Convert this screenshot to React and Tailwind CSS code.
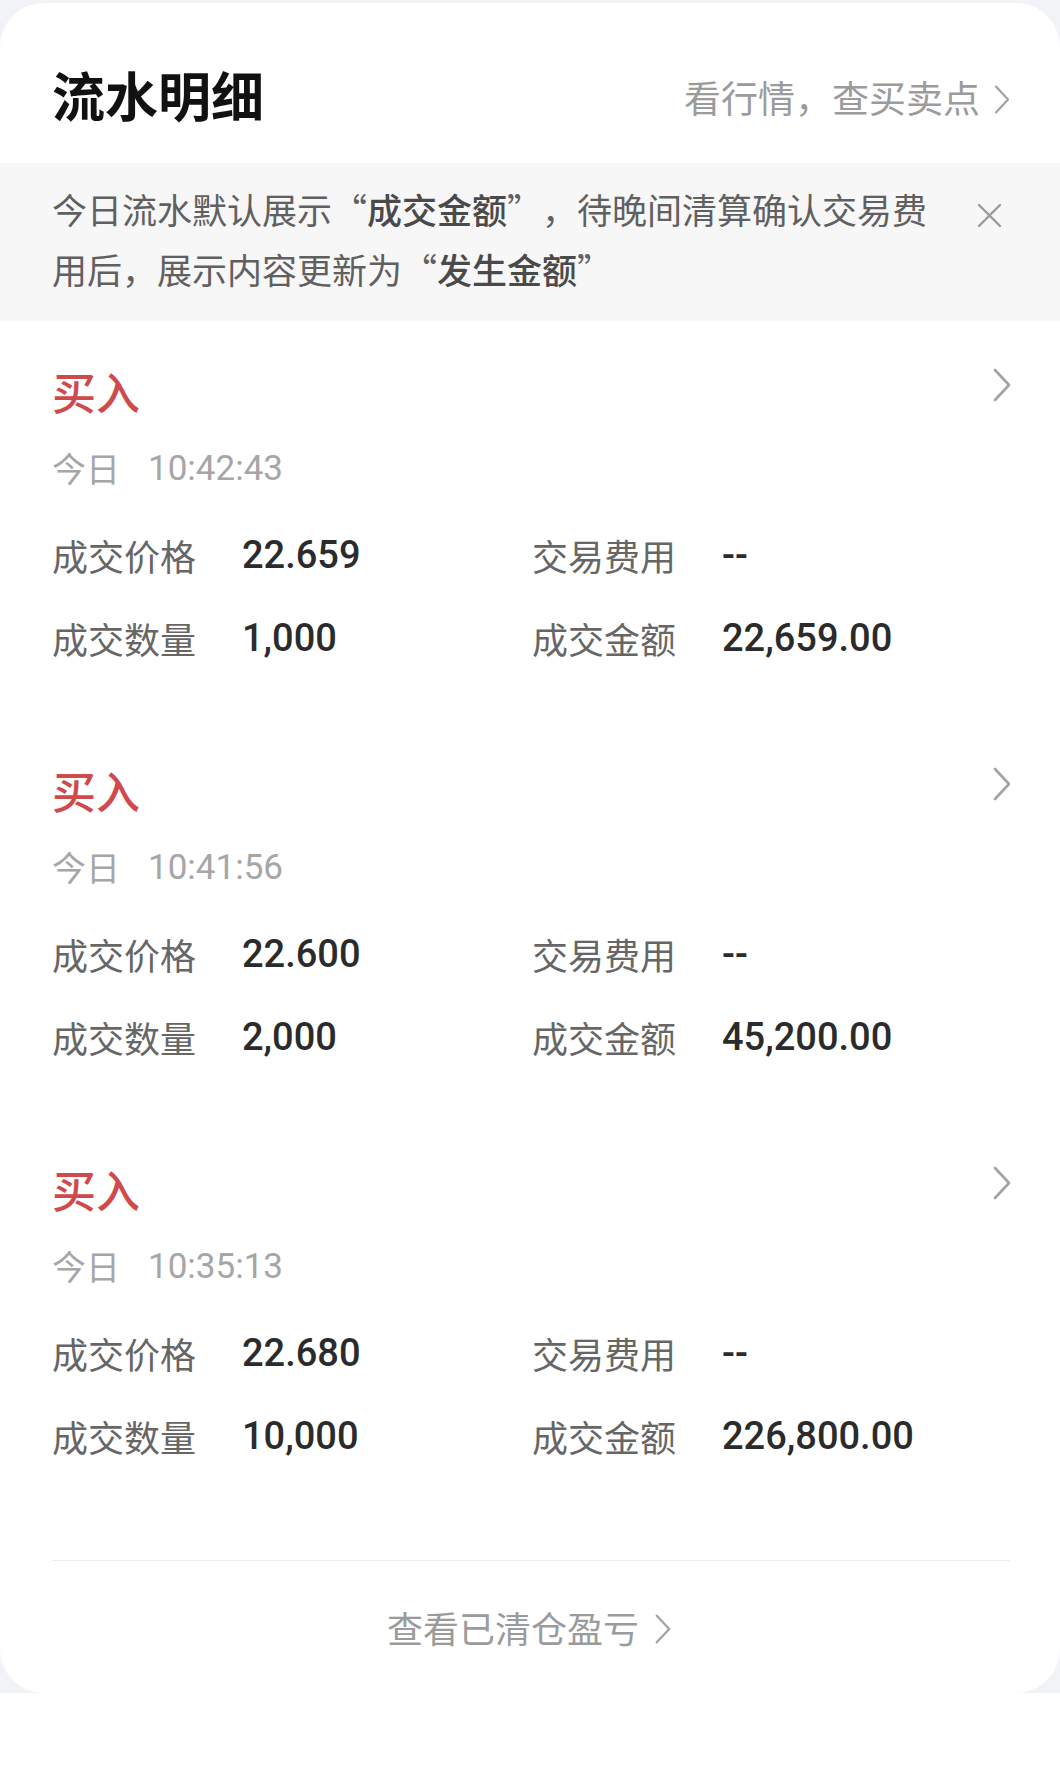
import React from 'react'

const cjk = "[font-family:'Noto_Sans_CJK_SC','Noto_Sans',sans-serif]"
const num = "[font-family:Roboto,'Noto_Sans_CJK_SC',sans-serif]"

const trades = [
  { time: '10:42:43', price: '22.659', qty: '1,000', fee: '--', amount: '22,659.00' },
  { time: '10:41:56', price: '22.600', qty: '2,000', fee: '--', amount: '45,200.00' },
  { time: '10:35:13', price: '22.680', qty: '10,000', fee: '--', amount: '226,800.00' },
]

const Chevron = ({ className }) => (
  <svg viewBox="0 0 20 36" className={className} fill="none">
    <path d="M3 3 L17 18 L3 33" stroke="#a3a3a3" strokeWidth="2.6" strokeLinecap="round" strokeLinejoin="round" />
  </svg>
)

const Cell = ({ label, value }) => (
  <div className="flex h-[60px] items-center">
    <span className={`${cjk} w-[190px] text-[36px] leading-none text-[#666666]`}>{label}</span>
    <span className={`${num} text-[38px] font-medium leading-none text-[#2b2b2b]`}>{value}</span>
  </div>
)

const TradeBlock = ({ trade }) => (
  <div className="pl-[52px] pr-[48px] pt-[48px] pb-[52px]">
    <div className="flex h-[50px] items-start justify-between">
      <span className={`${cjk} -mt-[3px] text-[44px] font-medium leading-[50px] text-[#d04a4c]`}>买入</span>
      <Chevron className="-mt-[2px] h-[36px] w-[20px]" />
    </div>
    <div className="mt-[29px] flex h-[40px] items-center text-[#a6a6a6]">
      <span className={`${cjk} text-[34px] leading-none`}>今日</span>
      <span className={`${num} ml-[28px] text-[35px] leading-none`}>{trade.time}</span>
    </div>
    <div className="mt-[37px] grid grid-cols-2 gap-y-[23px]">
      <Cell label="成交价格" value={trade.price} />
      <Cell label="交易费用" value={trade.fee} />
      <Cell label="成交数量" value={trade.qty} />
      <Cell label="成交金额" value={trade.amount} />
    </div>
  </div>
)

export default function App() {
  return (
    <div className="min-h-[1791px] w-full bg-white">
      <div className="bg-[#f2f3f7] pt-[3px]">
        <div className="rounded-[44px] bg-white overflow-hidden">
          {/* header */}
          <div className="flex h-[160px] items-center justify-between pl-[52px] pr-[48px] pt-[22px]">
            <h1 className={`${cjk} text-[53px] font-bold leading-none text-[#111111]`}>流水明细</h1>
            <div className="flex items-center gap-[12px] pt-[6px]">
              <span className={`${cjk} text-[37px] leading-none text-[#9b9b9b]`}>看行情，查买卖点</span>
              <Chevron className="mt-[4px] h-[31px] w-[20px]" />
            </div>
          </div>

          {/* notice */}
          <div className="flex bg-[#f7f7f7] pt-[16px] pb-[22px] pl-[52px]">
            <p className={`${cjk} w-[890px] text-[35px] leading-[60px] text-[#606060] [text-spacing-trim:space-all]`}>
              今日流水默认展示“<span className="font-medium text-[#4a4a4a]">成交金额</span>”，待晚间清算确认交易费用后，展示内容更新为“<span className="font-medium text-[#4a4a4a]">发生金额</span>”
            </p>
            <svg viewBox="0 0 25 25" className="ml-[35px] mt-[24px] h-[25px] w-[25px] shrink-0" fill="none">
              <path d="M2 2 L23 23 M23 2 L2 23" stroke="#9a9a9a" strokeWidth="2.4" strokeLinecap="round" />
            </svg>
          </div>

          {trades.map((t) => (
            <TradeBlock key={t.time} trade={t} />
          ))}

          <div className="ml-[52px] mr-[50px] mt-[42px] h-px bg-[#ececec]" />

          <div className="flex h-[132px] items-center justify-center gap-[14px]">
            <span className={`${cjk} text-[36px] leading-none text-[#9b9b9b]`}>查看已清仓盈亏</span>
            <Chevron className="mt-[4px] h-[32px] w-[20px]" />
          </div>
        </div>
      </div>
    </div>
  )
}
